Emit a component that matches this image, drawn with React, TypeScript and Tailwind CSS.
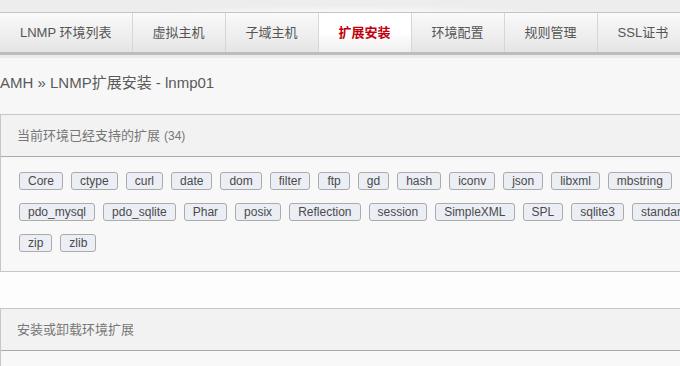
const tabs = [
  "LNMP 环境列表",
  "虚拟主机",
  "子域主机",
  "扩展安装",
  "环境配置",
  "规则管理",
  "SSL证书",
];

// php -m output, grouped the way the panel wraps it
const extRows = [
  ["Core", "ctype", "curl", "date", "dom", "filter", "ftp", "gd", "hash", "iconv", "json", "libxml", "mbstring", "mysqli", "mysqlnd", "openssl", "pcre", "PDO"],
  ["pdo_mysql", "pdo_sqlite", "Phar", "posix", "Reflection", "session", "SimpleXML", "SPL", "sqlite3", "standard", "tokenizer", "xml", "xmlreader", "xmlwriter"],
  ["zip", "zlib"],
];

function Tab({ label, active }: { label: string; active?: boolean }) {
  return (
    <div
      className={
        "shrink-0 whitespace-nowrap border-r border-[#d6d6d6] px-5 text-[13px] leading-[39px] " +
        (active
          ? "bg-gradient-to-b from-white via-white to-[#efefef] font-bold text-[#c0000c]"
          : "bg-gradient-to-b from-[#fafafa] to-[#e5e5e5] text-[#555]")
      }
    >
      {label}
    </div>
  );
}

function ExtTag({ name }: { name: string }) {
  return (
    <span className="h-[18px] shrink-0 whitespace-nowrap rounded-[3px] border border-[#ababab] bg-[#ebeef5] px-2 text-[12px] leading-[16px] text-[#4a4a4a]">
      {name}
    </span>
  );
}

function PanelHeader({ children }: { children: React.ReactNode }) {
  return (
    <div className="flex h-[42px] items-center border-b border-[#ababab] bg-[#f2f2f2] pl-4 text-[13px] text-[#777]">
      {children}
    </div>
  );
}

export default function App() {
  return (
    <div className="h-[366px] w-[680px] overflow-hidden bg-[#f7f7f7] font-['Liberation_Sans','Noto_Sans_CJK_SC',sans-serif]">
      <div className="h-[12px] bg-[radial-gradient(ellipse_at_52%_120%,#ffffff_0%,#f6f6f6_18%,#ededed_45%)]" />

      <nav className="flex w-[760px] border-t border-b-[3px] border-t-[#c4c4c4] border-b-[#bdbdbd]">
        {tabs.map((t) => (
          <Tab key={t} label={t} active={t === "扩展安装"} />
        ))}
      </nav>
      <div className="h-[3px] bg-[#ebebeb]" />

      <div className="mt-[15px] mb-[21px] whitespace-nowrap text-[15px] leading-[20px] text-[#5a5a5a]">
        AMH » LNMP扩展安装 - lnmp01
      </div>

      <section className="w-[760px] border-y border-l border-[#c6c6c6]">
        <PanelHeader>
          当前环境已经支持的扩展<span className="ml-1 text-[12px]">(34)</span>
        </PanelHeader>
        <div className="flex flex-col gap-[13px] bg-[#f8f8f8] pt-[15px] pb-[19px] pl-[18px]">
          {extRows.map((row, i) => (
            <div key={i} className="flex gap-2">
              {row.map((e) => (
                <ExtTag key={e} name={e} />
              ))}
            </div>
          ))}
        </div>
      </section>

      <div className="h-[36px] bg-[#fdfdfd]" />

      <section className="w-[760px] border-t border-l border-[#c6c6c6]">
        <PanelHeader>安装或卸载环境扩展</PanelHeader>
        <div className="h-[60px] bg-[#f8f8f8]" />
      </section>
    </div>
  );
}
